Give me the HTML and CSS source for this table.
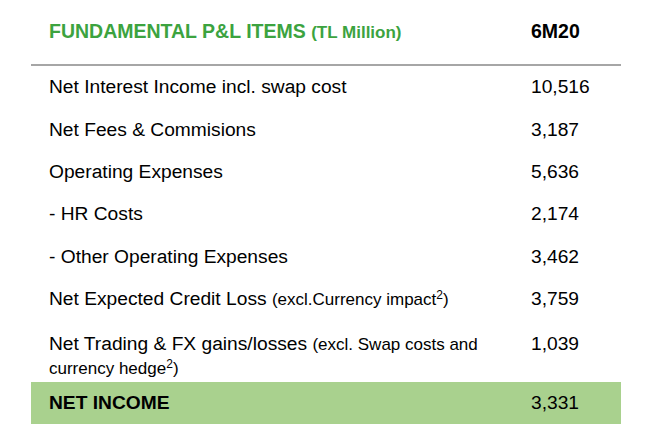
FILE: index.html
```html
<!DOCTYPE html>
<html>
<head>
<meta charset="utf-8">
<link rel="stylesheet" href="styles.css">
</head>
<body>
<div class="table">
  <div class="head">
    <div class="label title">FUNDAMENTAL P&amp;L ITEMS <span class="unit">(TL Million)</span></div>
    <div class="value period">6M20</div>
  </div>
  <div class="row"><div class="label">Net Interest Income incl. swap cost</div><div class="value">10,516</div></div>
  <div class="row"><div class="label">Net Fees &amp; Commisions</div><div class="value">3,187</div></div>
  <div class="row"><div class="label">Operating Expenses</div><div class="value">5,636</div></div>
  <div class="row"><div class="label">- HR Costs</div><div class="value">2,174</div></div>
  <div class="row"><div class="label">- Other Operating Expenses</div><div class="value">3,462</div></div>
  <div class="row"><div class="label">Net Expected Credit Loss <span class="note">(excl.Currency impact<sup>2</sup>)</span></div><div class="value">3,759</div></div>
  <div class="row tall"><div class="label">Net Trading &amp; FX gains/losses <span class="note">(excl. Swap costs and</span><br><span class="note">currency hedge<sup>2</sup>)</span></div><div class="value">1,039</div></div>
  <div class="row total"><div class="label">NET INCOME</div><div class="value">3,331</div></div>
</div>
</body>
</html>
```
FILE: styles.css
```css
html, body {
  margin: 0;
  padding: 0;
  background: #ffffff;
}
body {
  font-family: "Liberation Sans", Arial, sans-serif;
  color: #000;
}
.table {
  margin-left: 31px;
  width: 590px;
  padding-top: 10px;
}
.head {
  display: grid;
  grid-template-columns: 500px 1fr;
  align-items: center;
  height: 56px;
  border-bottom: 2px solid #a6a6a6;
  box-sizing: border-box;
  padding-bottom: 12px;
}
.label {
  padding-left: 18px;
}
.title {
  color: #3ca33f;
  font-weight: bold;
  font-size: 19.5px;
}
.unit {
  font-size: 17px;
}
.period {
  font-weight: bold;
  font-size: 19.5px;
}
.row {
  display: grid;
  grid-template-columns: 500px 1fr;
  align-items: center;
  height: 42.4px;
  font-size: 19.2px;
}
.note {
  font-size: 17px;
}
sup {
  font-size: 12px;
  line-height: 0;
  vertical-align: 6px;
}
.tall {
  height: 62px;
  align-items: start;
  padding-top: 12px;
  box-sizing: border-box;
  line-height: 23px;
}
.tall .label {
  padding-right: 10px;
}
.total {
  background: #a9d18e;
  height: 42px;
  font-weight: bold;
}
.total .value {
  font-weight: normal;
}
```
